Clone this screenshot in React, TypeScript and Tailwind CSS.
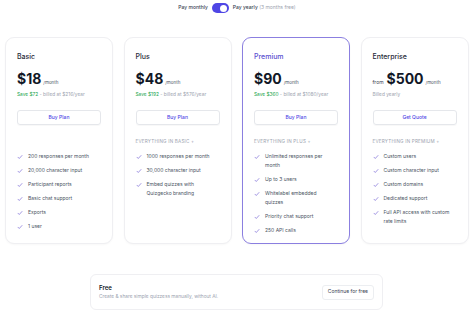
import React from "react";

type Plan = {
  name: string;
  price: string;
  prefix?: string;
  save?: string;
  billed: string;
  cta: string;
  heading?: string;
  features: string[];
  featured?: boolean;
};

const plans: Plan[] = [
  {
    name: "Basic",
    price: "$18",
    save: "Save $72",
    billed: " - billed at $216/year",
    cta: "Buy Plan",
    features: [
      "200 responses per month",
      "20,000 character input",
      "Participant reports",
      "Basic chat support",
      "Exports",
      "1 user",
    ],
  },
  {
    name: "Plus",
    price: "$48",
    save: "Save $192",
    billed: " - billed at $576/year",
    cta: "Buy Plan",
    heading: "EVERYTHING IN BASIC +",
    features: [
      "1000 responses per month",
      "30,000 character input",
      "Embed quizzes with Quizgecko branding",
    ],
  },
  {
    name: "Premium",
    price: "$90",
    save: "Save $360",
    billed: " - billed at $1080/year",
    cta: "Buy Plan",
    heading: "EVERYTHING IN PLUS +",
    featured: true,
    features: [
      "Unlimited responses per month",
      "Up to 3 users",
      "Whitelabel embedded quizzes",
      "Priority chat support",
      "250 API calls",
    ],
  },
  {
    name: "Enterprise",
    price: "$500",
    prefix: "from",
    billed: "Billed yearly",
    cta: "Get Quote",
    heading: "EVERYTHING IN PREMIUM +",
    features: [
      "Custom users",
      "Custom character input",
      "Custom domains",
      "Dedicated support",
      "Full API access with custom rate limits",
    ],
  },
];

function Check() {
  return (
    <svg viewBox="0 0 24 24" className="w-[6px] h-[6px] shrink-0" fill="none" stroke="#6d5bd0" strokeWidth="2.5" strokeLinecap="round" strokeLinejoin="round">
      <path d="M4 13l5 5L20 6" />
    </svg>
  );
}

function PlanCard({ plan }: { plan: Plan }) {
  return (
    <div
      className={
        "w-[108px] h-[207px] rounded-[9px] bg-white px-[11px] pt-[14px] flex flex-col shadow-[0_1px_2px_rgba(0,0,0,0.03)] " +
        (plan.featured ? "border border-[#8b7fe0]" : "border border-[#efeff2]")
      }
    >
      <div className={"text-[7px] leading-[9px] font-medium " + (plan.featured ? "text-[#5b4fd0]" : "text-[#1f2937]")}>
        {plan.name}
      </div>
      <div className="mt-[10px] flex items-baseline gap-[2px] h-[16px]">
        {plan.prefix && <span className="text-[5px] text-[#374151] mr-[1px]">{plan.prefix}</span>}
        <span className="text-[14px] leading-[16px] font-bold text-[#111827]">{plan.price}</span>
        <span className="text-[4.5px] text-[#4b5563]">/month</span>
      </div>
      <div className="mt-[4px] text-[4.8px] leading-[7px] whitespace-nowrap">
        {plan.save && <span className="text-[#16a34a]">{plan.save}</span>}
        <span className="text-[#9ca3af]">{plan.billed}</span>
      </div>
      <button className="mt-[12px] h-[15px] w-full rounded-[3px] border border-[#e5e7eb] text-[5px] font-medium text-[#4f46e5] shadow-[0_1px_1px_rgba(0,0,0,0.03)]">
        {plan.cta}
      </button>
      <div className="mt-[13px] h-[7px] text-[4.6px] leading-[7px] tracking-[0.2px] text-[#9ca3af]">
        {plan.heading ?? ""}
      </div>
      <ul className="mt-[7px] pr-[6px] flex flex-col gap-[5px]">
        {plan.features.map((f) => (
          <li key={f} className="flex gap-[5px] text-[5px] leading-[9px] text-[#4b5563]">
            <span className="h-[9px] flex items-center"><Check /></span>
            <span>{f}</span>
          </li>
        ))}
      </ul>
    </div>
  );
}

export default function App() {
  return (
    <div className="w-[474px] h-[313px] bg-white overflow-hidden" style={{ fontFamily: "Inter, 'Noto Sans', sans-serif" }}>
      <div className="flex items-center justify-center gap-[4px] pt-[3px] h-[13px]">
        <span className="text-[5px] font-medium text-[#374151]">Pay monthly</span>
        <span className="w-[17px] h-[10px] rounded-full bg-[#4f46e5] flex items-center justify-end pr-[1.5px]">
          <span className="w-[7px] h-[7px] rounded-full bg-white" />
        </span>
        <span className="text-[5px] font-medium text-[#374151]">
          Pay yearly <span className="text-[#9ca3af] font-normal">(3 months free)</span>
        </span>
      </div>
      <div className="mt-[24px] pl-[5px] flex gap-[10.5px]">
        {plans.map((p) => (
          <PlanCard key={p.name} plan={p} />
        ))}
      </div>
      <div className="mt-[30px] ml-[90px] w-[293px] h-[36px] rounded-[6px] border border-[#efeff2] flex items-center justify-between pl-[8px] pr-[8px]">
        <div>
          <div className="text-[6px] leading-[8px] font-semibold text-[#111827]">Free</div>
          <div className="text-[4.8px] leading-[8px] text-[#9ca3af]">Create &amp; share simple quizzess manually, without AI.</div>
        </div>
        <button className="h-[15px] px-[5px] rounded-[3px] border border-[#eceef1] text-[5px] text-[#374151]">Continue for free</button>
      </div>
    </div>
  );
}
